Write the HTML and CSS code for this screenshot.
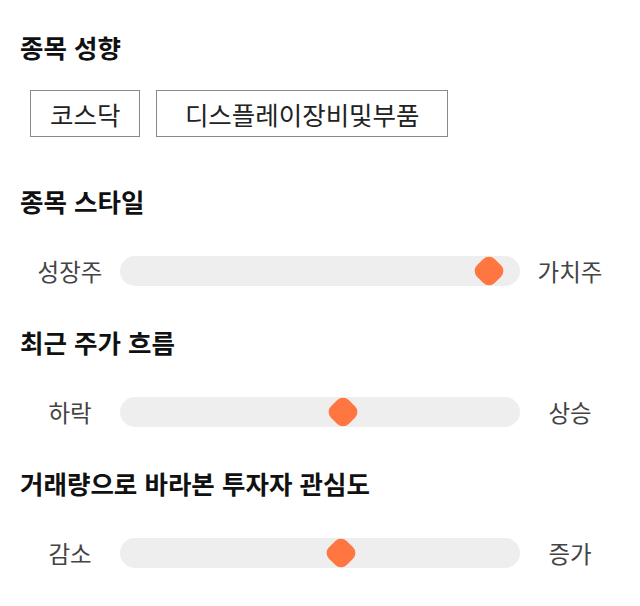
FILE: index.html
```html
<!DOCTYPE html>
<html lang="ko">
<head>
<meta charset="utf-8">
<link rel="stylesheet" href="styles.css">
</head>
<body>
<main class="page">
  <section class="section">
    <h2 class="title">종목 성향</h2>
    <div class="chips">
      <span class="chip">코스닥</span>
      <span class="chip chip-wide">디스플레이장비및부품</span>
    </div>
  </section>
  <section class="section">
    <h2 class="title">종목 스타일</h2>
    <div class="slider">
      <span class="label">성장주</span>
      <div class="track"><span class="thumb" style="left: 92.25%"></span></div>
      <span class="label">가치주</span>
    </div>
  </section>
  <section class="section">
    <h2 class="title">최근 주가 흐름</h2>
    <div class="slider">
      <span class="label">하락</span>
      <div class="track"><span class="thumb" style="left: 55.75%"></span></div>
      <span class="label">상승</span>
    </div>
  </section>
  <section class="section">
    <h2 class="title">거래량으로 바라본 투자자 관심도</h2>
    <div class="slider">
      <span class="label">감소</span>
      <div class="track"><span class="thumb" style="left: 55.25%"></span></div>
      <span class="label">증가</span>
    </div>
  </section>
</main>
</body>
</html>
```
FILE: styles.css
```css
html, body {
  margin: 0;
  padding: 0;
  background: #ffffff;
}
body {
  font-family: "Noto Sans CJK KR", "Noto Sans", sans-serif;
  color: #111111;
}
.page {
  padding: 32px 20px 0 20px;
  display: flex;
  flex-direction: column;
  gap: 41px;
}
.section {
  display: flex;
  flex-direction: column;
}
.title {
  margin: 0;
  font-size: 25.5px;
  line-height: 30px;
  font-weight: 700;
  color: #111111;
}
.chips {
  display: flex;
  gap: 16px;
  padding-left: 10px;
  margin-top: 28px;
  margin-bottom: 8px;
}
.chip {
  display: flex;
  align-items: center;
  height: 47px;
  box-sizing: border-box;
  padding: 0 19px;
  border: 1px solid #8a8a8a;
  font-size: 25.5px;
  color: #222222;
}
.chip-wide {
  padding: 0 27.5px;
}
.slider {
  margin-top: 40px;
  display: grid;
  grid-template-columns: 100px 1fr 100px;
  align-items: center;
}
.label {
  text-align: center;
  font-size: 23.5px;
  line-height: 30px;
  color: #444444;
}
.track {
  position: relative;
  height: 30px;
  border-radius: 15px;
  background: #eeeeee;
}
.thumb {
  position: absolute;
  top: 50%;
  width: 25px;
  height: 25px;
  border-radius: 8px;
  background: #ff7640;
  transform: translate(-50%, -50%) rotate(45deg);
}
```
